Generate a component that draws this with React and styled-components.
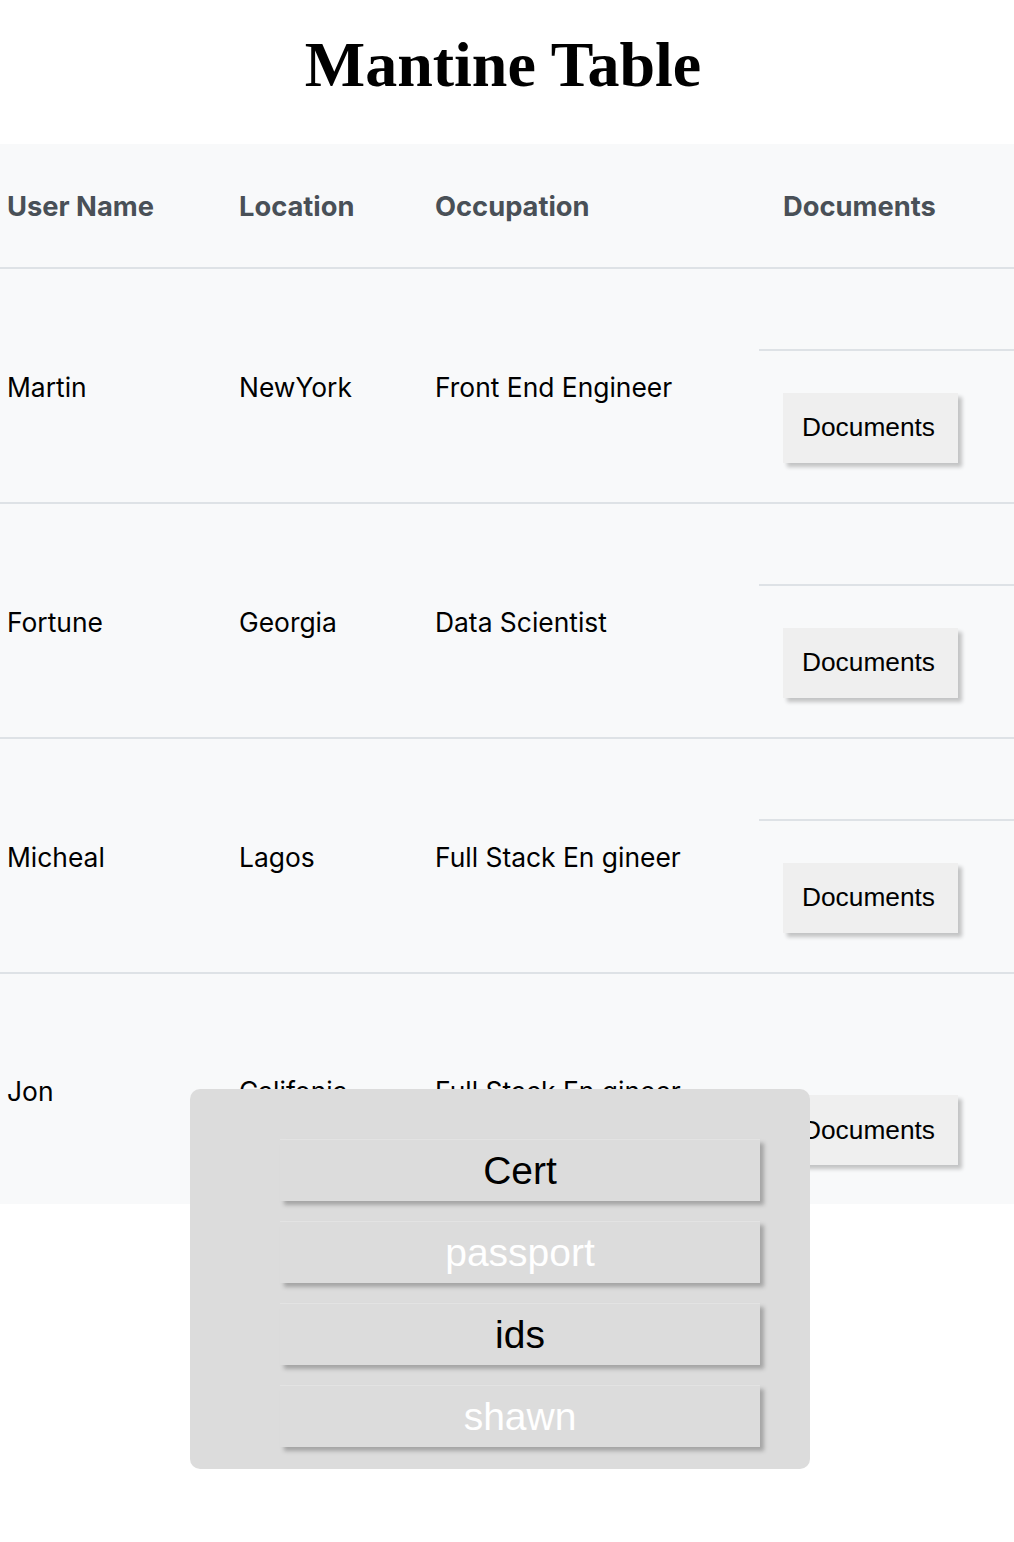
import styled, { createGlobalStyle } from "styled-components";

const GlobalStyle = createGlobalStyle`
  body {
    margin: 0;
    background: #ffffff;
  }
`;

const Page = styled.div`
  position: relative;
  width: 1014px;
  height: 1542px;
  overflow: hidden;
`;

const Header = styled.div`
  height: 144px;
  display: flex;
  justify-content: center;
  align-items: center;
`;

const Title = styled.h1`
  margin: 0;
  padding: 0 8px 14px 0;
  font-family: "Liberation Serif", "Times New Roman", serif;
  font-weight: 700;
  font-size: 64px;
  line-height: 1;
  color: #000;
`;

const Table = styled.div`
  background: #f8f9fa;
`;

const Row = styled.div`
  display: grid;
  grid-template-columns: 232px 196px 331px 1fr;
  height: ${(p) => p.$height}px;
`;

const HeadCell = styled.div`
  display: flex;
  align-items: center;
  padding-left: ${(p) => (p.$doc ? 24 : 7)}px;
  padding-top: 2px;
  border-bottom: 2px solid #dee2e6;
  font-family: Inter, "Noto Sans", sans-serif;
  font-weight: 700;
  font-size: 27.3px;
  color: #495057;
`;

const Cell = styled.div`
  display: flex;
  align-items: center;
  padding-left: 7px;
  padding-top: 3px;
  border-bottom: ${(p) => (p.$last ? "none" : "2px solid #dee2e6")};
  font-family: Inter, "Noto Sans", sans-serif;
  font-size: 26.4px;
  color: #000;
  white-space: nowrap;
  overflow: hidden;
`;

const DocCell = styled.div`
  display: flex;
  flex-direction: column;
`;

const DocSpacer = styled.div`
  height: 80px;
  flex: none;
  border-bottom: ${(p) => (p.$last ? "none" : "2px solid #dee2e6")};
`;

const DocBody = styled.div`
  flex: 1;
  display: flex;
  align-items: center;
  padding: 2px 0 0 24px;
  border-bottom: ${(p) => (p.$last ? "none" : "2px solid #dee2e6")};
`;

const DocButton = styled.button`
  width: 175px;
  height: 70px;
  border: none;
  background: #efefef;
  box-shadow: 4px 4px 4px rgba(0, 0, 0, 0.22);
  font-family: "Liberation Sans", Arial, sans-serif;
  font-size: 26.3px;
  color: #000;
  padding: 0;
  text-align: left;
  text-indent: 19px;
`;

const Modal = styled.div`
  position: absolute;
  left: 190px;
  top: 1089px;
  width: 620px;
  height: 380px;
  box-sizing: border-box;
  background: #dcdcdc;
  border-radius: 10px;
  padding: 50px 0 0 90px;
  display: flex;
  flex-direction: column;
  gap: 20px;
`;

const OptionButton = styled.button`
  width: 480px;
  height: 62px;
  padding: 0;
  border: none;
  border-top: 1px solid #e3e3e3;
  background: #dcdcdc;
  box-shadow: 4px 4px 4px rgba(0, 0, 0, 0.25);
  font-family: "Liberation Sans", Arial, sans-serif;
  font-size: 39px;
  color: ${(p) => (p.$light ? "#ffffff" : "#000000")};
`;

const users = [
  { name: "Martin", location: "NewYork", job: "Front End Engineer" },
  { name: "Fortune", location: "Georgia", job: "Data Scientist" },
  { name: "Micheal", location: "Lagos", job: "Full Stack En gineer" },
  { name: "Jon", location: "Califonia", job: "Full Stack En gineer" },
];

const options = ["Cert", "passport", "ids", "shawn"];

const App = () => {
  return (
    <Page>
      <GlobalStyle />
      <Header>
        <Title>Mantine Table</Title>
      </Header>
      <Table>
        <Row $height={125}>
          <HeadCell>User Name</HeadCell>
          <HeadCell>Location</HeadCell>
          <HeadCell>Occupation</HeadCell>
          <HeadCell $doc>Documents</HeadCell>
        </Row>
        {users.map((u, i) => {
          const last = i === users.length - 1;
          return (
            <Row key={u.name} $height={last ? 230 : 235}>
              <Cell $last={last}>{u.name}</Cell>
              <Cell $last={last}>{u.location}</Cell>
              <Cell $last={last}>{u.job}</Cell>
              <DocCell>
                <DocSpacer $last={last} />
                <DocBody $last={last}>
                  <DocButton>Documents</DocButton>
                </DocBody>
              </DocCell>
            </Row>
          );
        })}
      </Table>
      <Modal>
        {options.map((o, i) => (
          <OptionButton key={o} $light={i % 2 === 1}>
            {o}
          </OptionButton>
        ))}
      </Modal>
    </Page>
  );
};

export default App;
